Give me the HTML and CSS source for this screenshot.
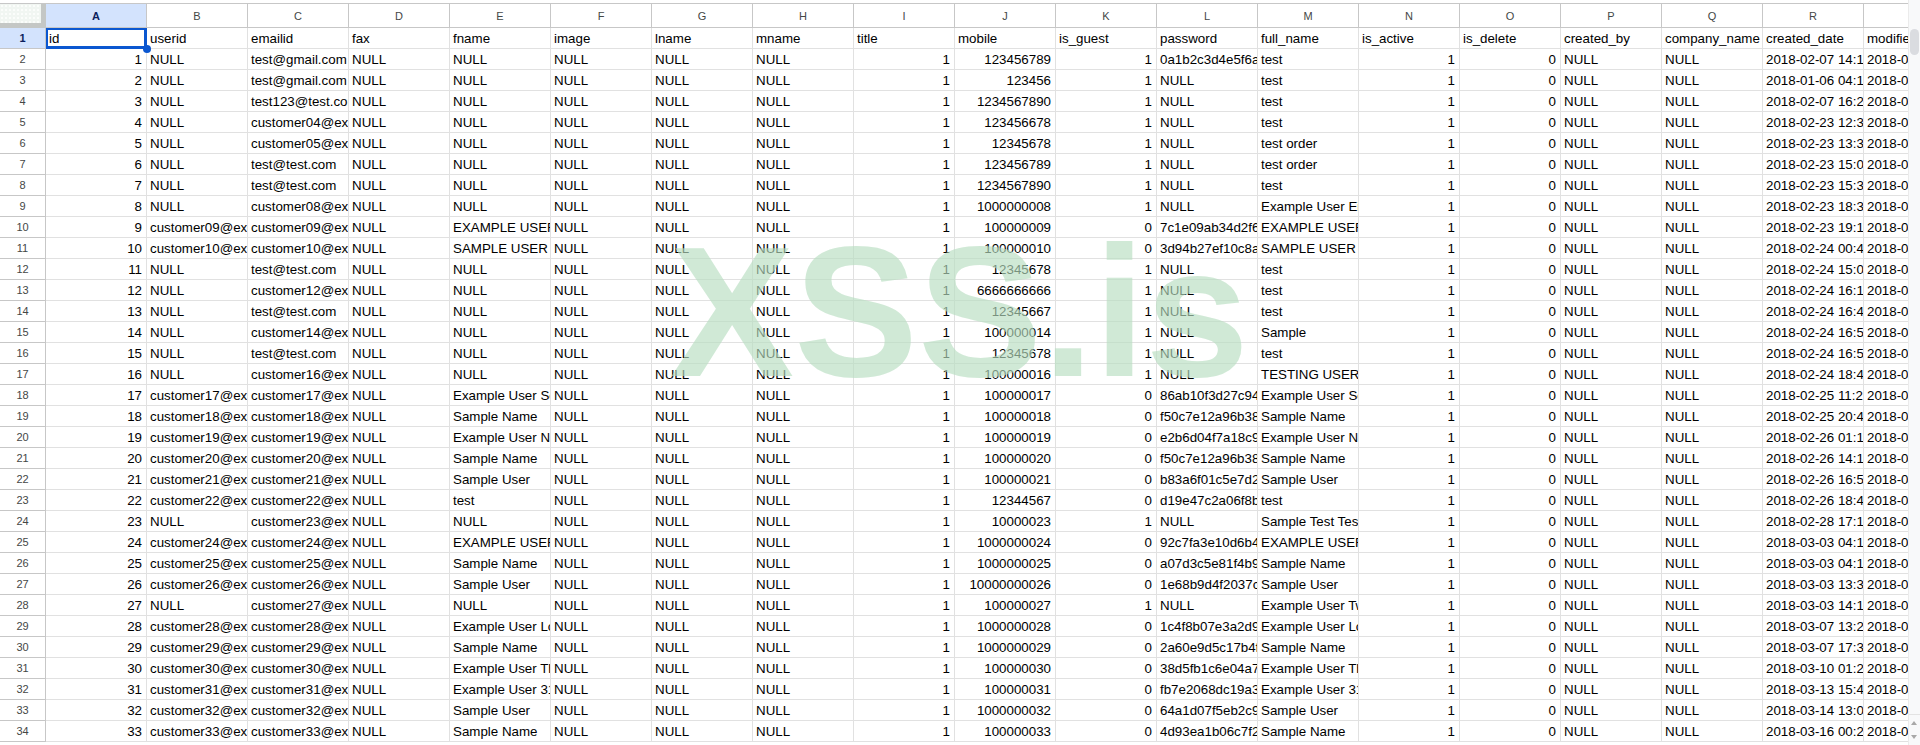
FILE: index.html
```html
<!DOCTYPE html>
<html lang="en">
<head>
<meta charset="utf-8">
<title>Sheet</title>
<link rel="stylesheet" href="styles.css">
</head>
<body>
<div class="app">
<main class="sheet">
<table class="grid">
<colgroup><col class="c-row"><col class="c"><col class="c"><col class="c"><col class="c"><col class="c"><col class="c"><col class="c"><col class="c"><col class="c"><col class="c"><col class="c"><col class="c"><col class="c"><col class="c"><col class="c"><col class="c"><col class="c"><col class="c"><col class="c"></colgroup>
<thead><tr><th class="corner"><div class="corner-fill"></div><th class="active">A<th>B<th>C<th>D<th>E<th>F<th>G<th>H<th>I<th>J<th>K<th>L<th>M<th>N<th>O<th>P<th>Q<th>R<th></tr></thead>
<tbody>
<tr><th class="active">1<td class="sel">id<td>userid<td>emailid<td>fax<td>fname<td>image<td>lname<td>mname<td>title<td>mobile<td>is_guest<td>password<td>full_name<td>is_active<td>is_delete<td>created_by<td>company_name<td>created_date<td>modified_date</tr>
<tr><th>2<td class=n>1<td>NULL<td>test@gmail.com<td>NULL<td>NULL<td>NULL<td>NULL<td>NULL<td class=n>1<td class=n>123456789<td class=n>1<td>0a1b2c3d4e5f6a7b<td>test<td class=n>1<td class=n>0<td>NULL<td>NULL<td>2018-02-07 14:1<td>2018-0</tr>
<tr><th>3<td class=n>2<td>NULL<td>test@gmail.com<td>NULL<td>NULL<td>NULL<td>NULL<td>NULL<td class=n>1<td class=n>123456<td class=n>1<td>NULL<td>test<td class=n>1<td class=n>0<td>NULL<td>NULL<td>2018-01-06 04:1<td>2018-0</tr>
<tr><th>4<td class=n>3<td>NULL<td>test123@test.com<td>NULL<td>NULL<td>NULL<td>NULL<td>NULL<td class=n>1<td class=n>1234567890<td class=n>1<td>NULL<td>test<td class=n>1<td class=n>0<td>NULL<td>NULL<td>2018-02-07 16:2<td>2018-0</tr>
<tr><th>5<td class=n>4<td>NULL<td>customer04@example.org<td>NULL<td>NULL<td>NULL<td>NULL<td>NULL<td class=n>1<td class=n>123456678<td class=n>1<td>NULL<td>test<td class=n>1<td class=n>0<td>NULL<td>NULL<td>2018-02-23 12:3<td>2018-0</tr>
<tr><th>6<td class=n>5<td>NULL<td>customer05@example.org<td>NULL<td>NULL<td>NULL<td>NULL<td>NULL<td class=n>1<td class=n>12345678<td class=n>1<td>NULL<td>test order<td class=n>1<td class=n>0<td>NULL<td>NULL<td>2018-02-23 13:3<td>2018-0</tr>
<tr><th>7<td class=n>6<td>NULL<td>test@test.com<td>NULL<td>NULL<td>NULL<td>NULL<td>NULL<td class=n>1<td class=n>123456789<td class=n>1<td>NULL<td>test order<td class=n>1<td class=n>0<td>NULL<td>NULL<td>2018-02-23 15:0<td>2018-0</tr>
<tr><th>8<td class=n>7<td>NULL<td>test@test.com<td>NULL<td>NULL<td>NULL<td>NULL<td>NULL<td class=n>1<td class=n>1234567890<td class=n>1<td>NULL<td>test<td class=n>1<td class=n>0<td>NULL<td>NULL<td>2018-02-23 15:3<td>2018-0</tr>
<tr><th>9<td class=n>8<td>NULL<td>customer08@example.org<td>NULL<td>NULL<td>NULL<td>NULL<td>NULL<td class=n>1<td class=n>1000000008<td class=n>1<td>NULL<td>Example User Eight<td class=n>1<td class=n>0<td>NULL<td>NULL<td>2018-02-23 18:3<td>2018-0</tr>
<tr><th>10<td class=n>9<td>customer09@example.org<td>customer09@example.org<td>NULL<td>EXAMPLE USER NINE<td>NULL<td>NULL<td>NULL<td class=n>1<td class=n>100000009<td class=n>0<td>7c1e09ab34d2f685<td>EXAMPLE USER NINE<td class=n>1<td class=n>0<td>NULL<td>NULL<td>2018-02-23 19:1<td>2018-0</tr>
<tr><th>11<td class=n>10<td>customer10@example.org<td>customer10@example.org<td>NULL<td>SAMPLE USER<td>NULL<td>NULL<td>NULL<td class=n>1<td class=n>100000010<td class=n>0<td>3d94b27ef10c8a56<td>SAMPLE USER<td class=n>1<td class=n>0<td>NULL<td>NULL<td>2018-02-24 00:4<td>2018-0</tr>
<tr><th>12<td class=n>11<td>NULL<td>test@test.com<td>NULL<td>NULL<td>NULL<td>NULL<td>NULL<td class=n>1<td class=n>12345678<td class=n>1<td>NULL<td>test<td class=n>1<td class=n>0<td>NULL<td>NULL<td>2018-02-24 15:0<td>2018-0</tr>
<tr><th>13<td class=n>12<td>NULL<td>customer12@example.org<td>NULL<td>NULL<td>NULL<td>NULL<td>NULL<td class=n>1<td class=n>6666666666<td class=n>1<td>NULL<td>test<td class=n>1<td class=n>0<td>NULL<td>NULL<td>2018-02-24 16:1<td>2018-0</tr>
<tr><th>14<td class=n>13<td>NULL<td>test@test.com<td>NULL<td>NULL<td>NULL<td>NULL<td>NULL<td class=n>1<td class=n>12345667<td class=n>1<td>NULL<td>test<td class=n>1<td class=n>0<td>NULL<td>NULL<td>2018-02-24 16:4<td>2018-0</tr>
<tr><th>15<td class=n>14<td>NULL<td>customer14@example.org<td>NULL<td>NULL<td>NULL<td>NULL<td>NULL<td class=n>1<td class=n>100000014<td class=n>1<td>NULL<td>Sample<td class=n>1<td class=n>0<td>NULL<td>NULL<td>2018-02-24 16:5<td>2018-0</tr>
<tr><th>16<td class=n>15<td>NULL<td>test@test.com<td>NULL<td>NULL<td>NULL<td>NULL<td>NULL<td class=n>1<td class=n>12345678<td class=n>1<td>NULL<td>test<td class=n>1<td class=n>0<td>NULL<td>NULL<td>2018-02-24 16:5<td>2018-0</tr>
<tr><th>17<td class=n>16<td>NULL<td>customer16@example.org<td>NULL<td>NULL<td>NULL<td>NULL<td>NULL<td class=n>1<td class=n>100000016<td class=n>1<td>NULL<td>TESTING USER<td class=n>1<td class=n>0<td>NULL<td>NULL<td>2018-02-24 18:4<td>2018-0</tr>
<tr><th>18<td class=n>17<td>customer17@example.org<td>customer17@example.org<td>NULL<td>Example User Seventeen<td>NULL<td>NULL<td>NULL<td class=n>1<td class=n>100000017<td class=n>0<td>86ab10f3d27c94e5<td>Example User Seventeen<td class=n>1<td class=n>0<td>NULL<td>NULL<td>2018-02-25 11:2<td>2018-0</tr>
<tr><th>19<td class=n>18<td>customer18@example.org<td>customer18@example.org<td>NULL<td>Sample Name<td>NULL<td>NULL<td>NULL<td class=n>1<td class=n>100000018<td class=n>0<td>f50c7e12a96b38d4<td>Sample Name<td class=n>1<td class=n>0<td>NULL<td>NULL<td>2018-02-25 20:4<td>2018-0</tr>
<tr><th>20<td class=n>19<td>customer19@example.org<td>customer19@example.org<td>NULL<td>Example User Nineteen<td>NULL<td>NULL<td>NULL<td class=n>1<td class=n>100000019<td class=n>0<td>e2b6d04f7a18c935<td>Example User Nineteen<td class=n>1<td class=n>0<td>NULL<td>NULL<td>2018-02-26 01:1<td>2018-0</tr>
<tr><th>21<td class=n>20<td>customer20@example.org<td>customer20@example.org<td>NULL<td>Sample Name<td>NULL<td>NULL<td>NULL<td class=n>1<td class=n>100000020<td class=n>0<td>f50c7e12a96b38d4<td>Sample Name<td class=n>1<td class=n>0<td>NULL<td>NULL<td>2018-02-26 14:1<td>2018-0</tr>
<tr><th>22<td class=n>21<td>customer21@example.org<td>customer21@example.org<td>NULL<td>Sample User<td>NULL<td>NULL<td>NULL<td class=n>1<td class=n>100000021<td class=n>0<td>b83a6f01c5e7d294<td>Sample User<td class=n>1<td class=n>0<td>NULL<td>NULL<td>2018-02-26 16:5<td>2018-0</tr>
<tr><th>23<td class=n>22<td>customer22@example.org<td>customer22@example.org<td>NULL<td>test<td>NULL<td>NULL<td>NULL<td class=n>1<td class=n>12344567<td class=n>0<td>d19e47c2a06f8b35<td>test<td class=n>1<td class=n>0<td>NULL<td>NULL<td>2018-02-26 18:4<td>2018-0</tr>
<tr><th>24<td class=n>23<td>NULL<td>customer23@example.org<td>NULL<td>NULL<td>NULL<td>NULL<td>NULL<td class=n>1<td class=n>10000023<td class=n>1<td>NULL<td>Sample Test Test<td class=n>1<td class=n>0<td>NULL<td>NULL<td>2018-02-28 17:1<td>2018-0</tr>
<tr><th>25<td class=n>24<td>customer24@example.org<td>customer24@example.org<td>NULL<td>EXAMPLE USER LONG<td>NULL<td>NULL<td>NULL<td class=n>1<td class=n>1000000024<td class=n>0<td>92c7fa3e10d6b485<td>EXAMPLE USER LONG<td class=n>1<td class=n>0<td>NULL<td>NULL<td>2018-03-03 04:1<td>2018-0</tr>
<tr><th>26<td class=n>25<td>customer25@example.org<td>customer25@example.org<td>NULL<td>Sample Name<td>NULL<td>NULL<td>NULL<td class=n>1<td class=n>1000000025<td class=n>0<td>a07d3c5e81f4b926<td>Sample Name<td class=n>1<td class=n>0<td>NULL<td>NULL<td>2018-03-03 04:1<td>2018-0</tr>
<tr><th>27<td class=n>26<td>customer26@example.org<td>customer26@example.org<td>NULL<td>Sample User<td>NULL<td>NULL<td>NULL<td class=n>1<td class=n>10000000026<td class=n>0<td>1e68b9d4f2037ca5<td>Sample User<td class=n>1<td class=n>0<td>NULL<td>NULL<td>2018-03-03 13:3<td>2018-0</tr>
<tr><th>28<td class=n>27<td>NULL<td>customer27@example.org<td>NULL<td>NULL<td>NULL<td>NULL<td>NULL<td class=n>1<td class=n>100000027<td class=n>1<td>NULL<td>Example User Twenty<td class=n>1<td class=n>0<td>NULL<td>NULL<td>2018-03-03 14:1<td>2018-0</tr>
<tr><th>29<td class=n>28<td>customer28@example.org<td>customer28@example.org<td>NULL<td>Example User Long<td>NULL<td>NULL<td>NULL<td class=n>1<td class=n>1000000028<td class=n>0<td>1c4f8b07e3a2d965<td>Example User Long<td class=n>1<td class=n>0<td>NULL<td>NULL<td>2018-03-07 13:2<td>2018-0</tr>
<tr><th>30<td class=n>29<td>customer29@example.org<td>customer29@example.org<td>NULL<td>Sample Name<td>NULL<td>NULL<td>NULL<td class=n>1<td class=n>1000000029<td class=n>0<td>2a60e9d5c17b4f38<td>Sample Name<td class=n>1<td class=n>0<td>NULL<td>NULL<td>2018-03-07 17:3<td>2018-0</tr>
<tr><th>31<td class=n>30<td>customer30@example.org<td>customer30@example.org<td>NULL<td>Example User Thirty<td>NULL<td>NULL<td>NULL<td class=n>1<td class=n>100000030<td class=n>0<td>38d5fb1c6e04a729<td>Example User Thirty<td class=n>1<td class=n>0<td>NULL<td>NULL<td>2018-03-10 01:2<td>2018-0</tr>
<tr><th>32<td class=n>31<td>customer31@example.org<td>customer31@example.org<td>NULL<td>Example User 31<td>NULL<td>NULL<td>NULL<td class=n>1<td class=n>100000031<td class=n>0<td>fb7e2068dc19a354<td>Example User 31<td class=n>1<td class=n>0<td>NULL<td>NULL<td>2018-03-13 15:4<td>2018-0</tr>
<tr><th>33<td class=n>32<td>customer32@example.org<td>customer32@example.org<td>NULL<td>Sample User<td>NULL<td>NULL<td>NULL<td class=n>1<td class=n>1000000032<td class=n>0<td>64a1d07f5eb2c938<td>Sample User<td class=n>1<td class=n>0<td>NULL<td>NULL<td>2018-03-14 13:0<td>2018-0</tr>
<tr><th>34<td class=n>33<td>customer33@example.org<td>customer33@example.org<td>NULL<td>Sample Name<td>NULL<td>NULL<td>NULL<td class=n>1<td class=n>100000033<td class=n>0<td>4d93ea1b06c7f258<td>Sample Name<td class=n>1<td class=n>0<td>NULL<td>NULL<td>2018-03-16 00:2<td>2018-0</tr>
</tbody>
</table>
<div class="handle"></div>
<div class="watermark">XSS.is</div>
</main>
<aside class="scrollbar">
<div class="thumb"></div>
<div class="arrows"><span class="up"></span><span class="down"></span></div>
</aside>
</div>
</body>
</html>
```
FILE: styles.css
```css
html, body {
  margin: 0;
  height: 100%;
  overflow: hidden;
  background: #fff;
}
.app {
  display: flex;
  height: 745px;
}
.sheet {
  position: relative;
  width: 1908px;
  height: 745px;
  overflow: hidden;
  padding-top: 3px;
  box-sizing: border-box;
}
.grid {
  table-layout: fixed;
  width: 1965px;
  border-collapse: separate;
  border-spacing: 0;
  border-top: 1px solid #c7c7c7;
  font: 13.33px/15px "Liberation Sans", Arial, sans-serif;
  color: #000;
}
.c-row { width: 46px; }
.c { width: 101px; }
.grid td {
  box-sizing: border-box;
  height: 21px;
  padding: 3px 3px 2px;
  border-right: 1px solid #e1e1e1;
  border-bottom: 1px solid #e1e1e1;
  white-space: nowrap;
  overflow: hidden;
  vertical-align: bottom;
}
.grid td.n {
  text-align: right;
  padding-right: 4px;
}
.grid th {
  box-sizing: border-box;
  padding: 0;
  font: 11px/14px "Liberation Sans", Arial, sans-serif;
  color: #444746;
  text-align: center;
  background: #fff;
  border-right: 1px solid #c7c7c7;
  border-bottom: 1px solid #c7c7c7;
  overflow: hidden;
}
.grid thead th { height: 24px; }
.grid tbody th { height: 21px; }
.grid th.active {
  background: #d3e3fd;
  color: #0b1f5c;
  font-weight: bold;
}
.grid th.corner {
  position: relative;
  background: #c4c7c5;
  border: 0;
}
.corner-fill {
  position: absolute;
  left: 0;
  top: 0;
  width: 41px;
  height: 19px;
  background-color: #f1f6f2;
  background-image: radial-gradient(#fbfdfb 0.8px, transparent 1px);
  background-size: 4px 4px;
}
.grid td.sel {
  box-shadow: inset 0 0 0 2px #0b57d0;
  border-color: #0b57d0;
}
.handle {
  position: absolute;
  left: 143px;
  top: 45px;
  width: 8px;
  height: 8px;
  border-radius: 50%;
  background: #0b57d0;
  border: 0;
}
.watermark {
  position: absolute;
  left: 670px;
  top: 207px;
  font: bold 186px/210px "Liberation Sans", Arial, sans-serif;
  color: rgba(183, 221, 192, 0.655);
  white-space: nowrap;
  pointer-events: none;
}
.scrollbar {
  position: relative;
  width: 12px;
  height: 745px;
  background: #f8f9fa;
  border-left: 1px solid #ebebeb;
  box-sizing: border-box;
}
.thumb {
  position: absolute;
  left: 1px;
  right: 1px;
  top: 29px;
  height: 26px;
  border-radius: 5px;
  background: #dadce0;
}
.arrows {
  position: absolute;
  left: 0;
  right: 0;
  bottom: 0;
  height: 30px;
  border-top: 1px solid #e3e3e3;
}
.arrows span {
  position: absolute;
  left: 2px;
  width: 0;
  height: 0;
  border-left: 3px solid transparent;
  border-right: 3px solid transparent;
}
.up {
  top: 6px;
  border-bottom: 4px solid #a8a8a8;
}
.down {
  bottom: 6px;
  border-top: 4px solid #a8a8a8;
}
```
